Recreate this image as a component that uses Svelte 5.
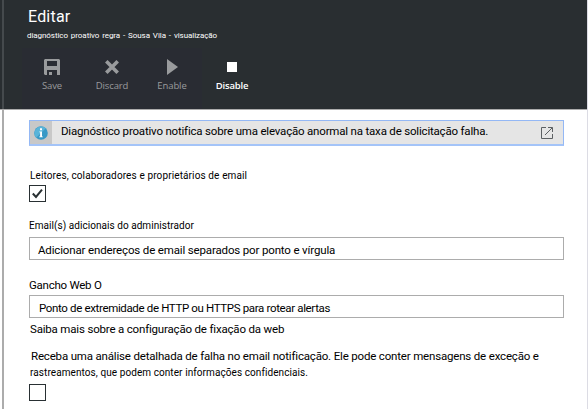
<script>
  let notifyOwners = $state(true);
  let detailed = $state(false);
</script>

<div class="blade">
  <div class="rail"></div>
  <div class="content">
    <header>
      <h1>Editar</h1>
      <p class="sub">diagnóstico proativo regra - Sousa Vila - visualização</p>
      <nav>
        <button class="dim">
          <svg width="16" height="16" viewBox="0 0 16 16"><path fill="currentColor" fill-rule="evenodd" d="M1 0H15L16 1V16H13V11H3V16H1L0 15V1ZM3 2V7H13V2ZM5 13H8V16H5Z" /></svg>
          <span>Save</span>
        </button>
        <button class="dim">
          <svg width="16" height="16" viewBox="0 0 16 16"><path stroke="currentColor" stroke-width="3.6" d="M2.3 2.3 13.7 13.7M13.7 2.3 2.3 13.7" /></svg>
          <span>Discard</span>
        </button>
        <button class="dim">
          <svg width="16" height="16" viewBox="0 0 16 16"><path fill="currentColor" d="M3 0 14 8 3 16Z" /></svg>
          <span>Enable</span>
        </button>
        <button class="active">
          <svg width="16" height="16" viewBox="0 0 16 16"><path fill="currentColor" d="M3 3H13V13H3Z" /></svg>
          <span>Disable</span>
        </button>
      </nav>
    </header>

    <main>
      <div class="banner">
        <span class="info">
          <svg width="14" height="14" viewBox="0 0 14 14"><circle cx="7" cy="7" r="6.8" fill="#3999c6" /><path fill="#59b4d9" d="M2.2 11.8A6.8 6.8 0 0 1 11.8 2.2Z" /><path fill="#fff" d="M6 2.3H8V4.2H6ZM5.3 5.4H8V10.4H8.8V11.3H5.2V10.4H6.1V6.3H5.3Z" /></svg>
        </span>
        <span class="msg">Diagnóstico proativo notifica sobre uma elevação anormal na taxa de solicitação falha.</span>
        <svg class="ext" width="12" height="12" viewBox="0 0 12 12" fill="none" stroke="#5c6063"><path d="M5 .5H.5V11.5H11.5V7M7 .5H11.5V5M11.3 .7 4 8" /></svg>
      </div>

      <label class="small readers" for="owners">Leitores, colaboradores e proprietários de email</label>
      <button id="owners" class="check" role="checkbox" aria-label="Email" aria-checked={notifyOwners} onclick={() => (notifyOwners = !notifyOwners)}>
        {#if notifyOwners}
          <svg width="15" height="15" viewBox="0 0 15 15" fill="none" stroke="#293033" stroke-width="2"><path d="M2.8 7.5 6 11 12 3.7" /></svg>
        {/if}
      </button>

      <p class="small emails">Email(s) adicionais do administrador</p>
      <div class="field first">Adicionar endereços de email separados por ponto e vírgula</div>

      <p class="hook">Gancho Web O</p>
      <div class="field second">Ponto de extremidade de HTTP ou HTTPS para rotear alertas</div>
      <p class="learn">Saiba mais sobre a configuração de fixação da web</p>

      <p class="receive">Receba uma análise detalhada de falha no email notificação. Ele pode conter mensagens de exceção e</p>
      <p class="small trace">rastreamentos, que podem conter informações confidenciais.</p>
      <button class="check last" role="checkbox" aria-label="Detalhes" aria-checked={detailed} onclick={() => (detailed = !detailed)}></button>
    </main>
  </div>
  <div class="edge"></div>
</div>

<style>
  .blade {
    width: 588px;
    height: 409px;
    display: flex;
    overflow: hidden;
    background: #fff;
    color: #000;
    font: 11.5px/16px Roboto, sans-serif;
    white-space: nowrap;
  }
  .rail {
    width: 4px;
    background: linear-gradient(#454a4d 109px, #acacac 109px) 2px 0 / 2px 100% no-repeat,
      linear-gradient(#292e31 109px, #acacac 109px, #acacac 110px, #fff 110px);
  }
  .content { width: 583px; }
  .edge { width: 1px; background: #dcdce4; }
  header {
    height: 110px;
    box-sizing: border-box;
    border-bottom: 1px solid #acacac;
    background: #292e31;
    color: #fff;
  }
  h1 {
    margin: 0;
    padding: 7px 0 0 24px;
    font: 16px/20px Roboto, sans-serif;
    letter-spacing: 0.2px;
  }
  .sub {
    margin: 0;
    padding: 4px 0 0 23px;
    font: 8px/10px Roboto, sans-serif;
    letter-spacing: -0.07px;
    word-spacing: 1px;
  }
  nav {
    display: flex;
    margin-top: 7px;
    padding-left: 18px;
    height: 61px;
    background: linear-gradient(#292c33, #292c33) 18px 0 / 180px 100% no-repeat;
  }
  button { all: unset; box-sizing: border-box; }
  nav button {
    width: 60px;
    padding-top: 11px;
    display: flex;
    flex-direction: column;
    align-items: center;
    font: 9.5px/14px 'Open Sans', sans-serif;
  }
  nav span { margin-top: 4px; }
  nav svg { display: block; }
  .dim { color: #999b9d; font-weight: 500; letter-spacing: -0.1px; }
  .active { color: #fff; font-weight: 600; letter-spacing: -0.2px; }
  main { padding: 10px 0 0 25px; }
  p { margin: 0; }
  .banner {
    width: 535px;
    height: 26px;
    box-sizing: border-box;
    display: flex;
    border: 1px solid #94b8f5;
    border-bottom: 2px solid #a4c4f8;
    background: #e5e5e5;
  }
  .info {
    width: 22px;
    display: flex;
    align-items: center;
    justify-content: center;
    background: #c8c8c8;
  }
  .msg { flex: 1; padding: 2px 0 0 9px; letter-spacing: -0.19px; }
  .ext { margin: 6px 10px 0 0; }
  .small { display: block; font-size: 10px; }
  .readers { padding: 22px 0 0 1px; letter-spacing: 0.12px; }
  .check {
    display: block;
    width: 17px;
    height: 17px;
    margin-top: 1px;
    border: 1px solid #293033;
  }
  .check svg { display: block; }
  .emails { padding-top: 16px; letter-spacing: 0.05px; }
  .field {
    width: 535px;
    height: 23px;
    box-sizing: border-box;
    border: 1px solid #acacac;
    line-height: 24px;
  }
  .first { margin-top: 3px; padding-left: 8px; letter-spacing: -0.15px; }
  .hook { padding-top: 17px; letter-spacing: -0.25px; }
  .second { margin-top: 2px; padding-left: 9px; letter-spacing: -0.35px; }
  .learn { padding: 3px 0 0 1px; letter-spacing: -0.18px; }
  .receive { padding: 11px 0 0 2px; letter-spacing: -0.175px; }
  .trace { padding: 1px 0 0 1px; letter-spacing: 0.08px; }
  .last { margin-top: 3px; }
</style>
